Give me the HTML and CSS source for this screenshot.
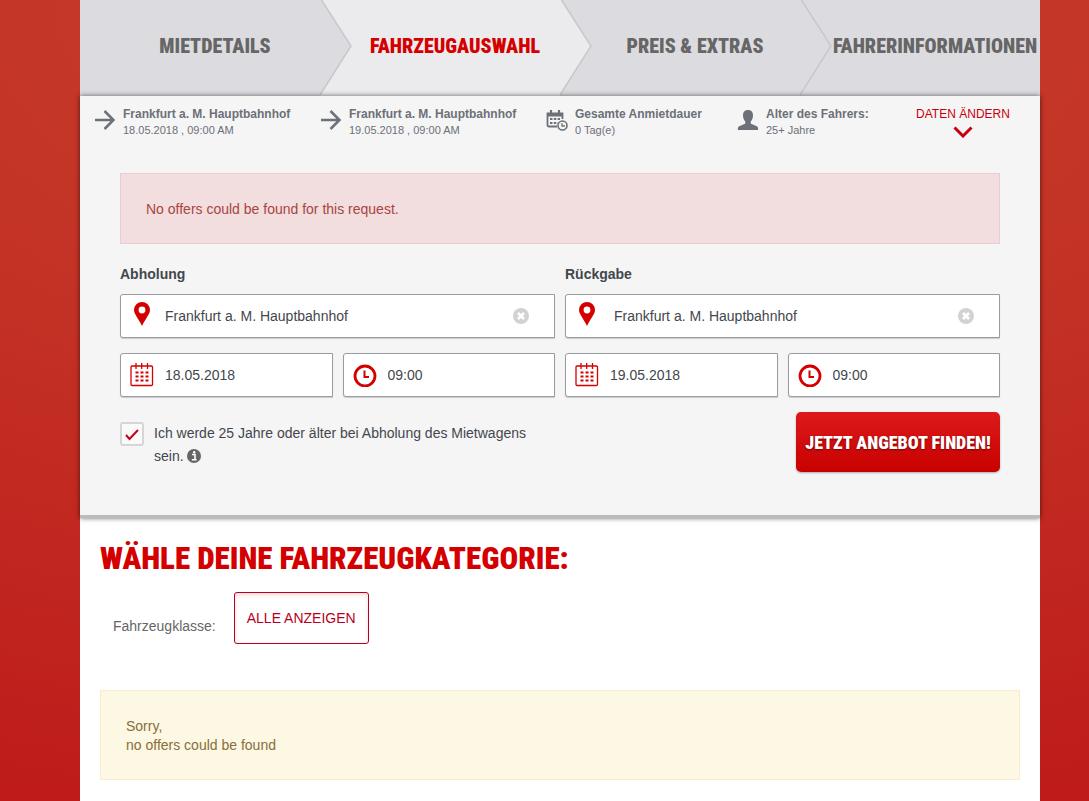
FILE: index.html
```html
<!DOCTYPE html>
<html lang="de">
<head>
    <meta charset="UTF-8">
    <meta name="viewport" content="width=device-width, initial-scale=1.0">
    <title>Fahrzeugauswahl</title>
    <link rel="stylesheet" href="styles.css">
</head>
<body>
    <!-- shared icons -->
    <svg class="sprite" aria-hidden="true">
        <symbol id="arrow" viewBox="0 0 22 22">
            <path d="M1 11h18M10.500 2l9 9-9 9" fill="none" stroke="currentColor" stroke-width="2.500"/>
        </symbol>
        <symbol id="pin" viewBox="0 0 16 24">
            <path fill-rule="evenodd" fill="currentColor" d="M8 0a8 8 0 0 0-8 8c0 4 4.500 8.500 8 16 3.500-7.500 8-12 8-16a8 8 0 0 0-8-8zm0 4.600a3.400 3.400 0 1 1 0 6.800 3.400 3.400 0 0 1 0-6.800z"/>
        </symbol>
        <symbol id="calendar" viewBox="0 0 24 24">
            <rect x="1" y="3" width="21.500" height="19.500" rx="1" fill="none" stroke="currentColor" stroke-width="1.300"/>
            <path d="M6 0v6M11.700 0v6M17.500 0v6" stroke="currentColor" stroke-width="1.300"/>
            <path d="M5.500 9.500h13M5.500 13.500h13M5.500 17.500h13" stroke="currentColor" stroke-width="2" stroke-dasharray="3 2"/>
        </symbol>
        <symbol id="clock" viewBox="0 0 24 24">
            <circle cx="12" cy="13" r="10" fill="none" stroke="currentColor" stroke-width="2.800"/>
            <path d="M11.500 7.500v6.500H16" fill="none" stroke="currentColor" stroke-width="2"/>
        </symbol>
        <symbol id="clear" viewBox="0 0 16 16">
            <circle cx="8" cy="8" r="8" fill="currentColor"/>
            <path d="M5 5l6 6M11 5l-6 6" stroke="#fff" stroke-width="2.600"/>
        </symbol>
        <symbol id="chevron" viewBox="0 0 32 95">
            <path class="chevron-fill" d="M0 0h1.500L31 46 0 95z"/>
            <path d="M1.500 0L31 46 0 95" fill="none" stroke="#c8c8cc" stroke-width="1.500"/>
        </symbol>
    </svg>

    <div class="page">
        <ol class="steps">
            <li class="step">Mietdetails<svg class="step-arrow"><use href="#chevron"/></svg></li>
            <li class="step active" aria-current="step">Fahrzeugauswahl<svg class="step-arrow"><use href="#chevron"/></svg></li>
            <li class="step">Preis &amp; Extras<svg class="step-arrow"><use href="#chevron"/></svg></li>
            <li class="step">Fahrerinformationen</li>
        </ol>

        <section class="search">
            <div class="summary">
                <div class="summary-item">
                    <svg class="summary-icon"><use href="#arrow"/></svg>
                    <p><strong>Frankfurt a. M. Hauptbahnhof</strong><br>18.05.2018 , 09:00 AM</p>
                </div>
                <div class="summary-item">
                    <svg class="summary-icon"><use href="#arrow"/></svg>
                    <p><strong>Frankfurt a. M. Hauptbahnhof</strong><br>19.05.2018 , 09:00 AM</p>
                </div>
                <div class="summary-item">
                    <svg class="summary-icon" viewBox="0 0 22 22">
                        <path d="M11 17.500H3q-1.500 0-1.500-1.500V4.500h15V10M1.500 6.500h15" fill="none" stroke="currentColor" stroke-width="1.800"/>
                        <path d="M5 1v4M13 1v4" stroke="currentColor" stroke-width="2.200"/>
                        <path d="M4 10h10M4 14h8" stroke="currentColor" stroke-width="2.200" stroke-dasharray="2.500 1.300"/>
                        <circle cx="16.500" cy="16.500" r="4.500" fill="#f5f5f5" stroke="currentColor" stroke-width="1.600"/>
                        <path d="M16 14v3h3" fill="none" stroke="currentColor" stroke-width="1.300"/>
                    </svg>
                    <p><strong>Gesamte Anmietdauer</strong><br>0 Tag(e)</p>
                </div>
                <div class="summary-item">
                    <svg class="summary-icon" viewBox="0 0 22 22">
                        <path fill="currentColor" d="M11 1c3.400 0 5 2.200 5 5.500 0 2.500-1 4.800-2.300 6v2c1.500 1.300 4.800 1.800 6.500 3 .8.600 1 2 1 3.500H.8c0-1.500.2-2.900 1-3.500 1.700-1.200 5-1.700 6.500-3v-2C7 11.300 6 9 6 6.500 6 3.200 7.600 1 11 1z"/>
                    </svg>
                    <p><strong>Alter des Fahrers:</strong><br>25+ Jahre</p>
                </div>
                <a class="change" href="#suche">Daten ändern
                    <svg class="change-icon" viewBox="0 0 20 12"><path d="M1.500 1.500L10 10l8.500-8.500" fill="none" stroke="currentColor" stroke-width="3"/></svg>
                </a>
            </div>

            <form class="search-form" id="suche">
                <p class="alert alert-danger">No offers could be found for this request.</p>

                <div class="stations">
                    <fieldset class="station">
                        <legend>Abholung</legend>
                        <div class="field field-wide">
                            <svg class="pin"><use href="#pin"/></svg>
                            <input type="text" aria-label="Abholstation" value="Frankfurt a. M. Hauptbahnhof">
                            <button class="clear" type="button" aria-label="Eingabe löschen"><svg><use href="#clear"/></svg></button>
                        </div>
                        <div class="field">
                            <svg class="field-icon"><use href="#calendar"/></svg>
                            <input type="text" aria-label="Abholdatum" value="18.05.2018">
                        </div>
                        <div class="field">
                            <svg class="field-icon"><use href="#clock"/></svg>
                            <input type="text" aria-label="Abholzeit" value="09:00">
                        </div>
                    </fieldset>
                    <fieldset class="station">
                        <legend>Rückgabe</legend>
                        <div class="field field-wide field-return">
                            <svg class="pin"><use href="#pin"/></svg>
                            <input type="text" aria-label="Rückgabestation" value="Frankfurt a. M. Hauptbahnhof">
                            <button class="clear" type="button" aria-label="Eingabe löschen"><svg><use href="#clear"/></svg></button>
                        </div>
                        <div class="field">
                            <svg class="field-icon"><use href="#calendar"/></svg>
                            <input type="text" aria-label="Rückgabedatum" value="19.05.2018">
                        </div>
                        <div class="field">
                            <svg class="field-icon"><use href="#clock"/></svg>
                            <input type="text" aria-label="Rückgabezeit" value="09:00">
                        </div>
                    </fieldset>
                </div>

                <div class="form-footer">
                    <div class="age">
                        <input type="checkbox" id="age" checked>
                        <label for="age">Ich werde 25 Jahre oder älter bei Abholung des Mietwagens sein.
                            <svg class="info" viewBox="0 0 14 14"><circle cx="7" cy="7" r="7" fill="#666"/><path d="M5 5.500h3v5M4.800 10.700h4.800" fill="none" stroke="#fff" stroke-width="1.600"/><circle cx="7.200" cy="3.200" r="1.200" fill="#fff"/></svg>
                        </label>
                    </div>
                    <button class="submit" type="submit">Jetzt Angebot finden!</button>
                </div>
            </form>
        </section>

        <main class="results">
            <h1>Wähle deine Fahrzeugkategorie:</h1>
            <div class="filter">
                <span>Fahrzeugklasse:</span>
                <button class="filter-button" type="button">Alle anzeigen</button>
            </div>
            <p class="alert alert-warning">Sorry,<br>no offers could be found</p>
        </main>
    </div>
</body>
</html>
```
FILE: styles.css
```css
* {
    box-sizing: border-box;
}

body {
    margin: 0;
    padding: 0 49px 0 80px;
    min-height: 100vh;
    background: radial-gradient(ellipse 150% 105% at 50% 0, #c63f28 0%, #c43426 40%, #be1b1a 100%) #be1b1a;
    color: #43474d;
    font-family: "Liberation Sans", Arial, sans-serif;
    font-size: 14px;
}

p {
    margin: 0;
}

.sprite {
    display: none;
}

.page {
    display: flex;
    flex-direction: column;
    max-width: 960px;
    min-height: 100vh;
    background-color: #fff;
}

/* step navigation */
.steps {
    display: grid;
    grid-template-columns: repeat(4, minmax(0, 1fr));
    margin: 0;
    padding: 0;
    list-style: none;
    background-color: #dcdce0;
}

.step {
    position: relative;
    display: flex;
    align-items: center;
    justify-content: center;
    height: 96px;
    padding: 0 0 4px 30px;
    color: #666;
    font-family: "Roboto Condensed", "Liberation Sans Narrow", "Liberation Sans", sans-serif;
    font-size: 20px;
    font-weight: 900;
    text-transform: uppercase;
    white-space: nowrap;
}

.step.active {
    background-color: #ebebed;
    color: #d40000;
}

.step-arrow {
    position: absolute;
    top: 0;
    left: 100%;
    z-index: 1;
    width: 32px;
    height: 95px;
    fill: #dcdce0;
}

.step.active .step-arrow {
    fill: #ebebed;
}

/* search panel */
.search {
    position: relative;
    z-index: 2;
    background-color: #f5f5f5;
    border-bottom: 3px solid #bbb;
    box-shadow: 0 0 5px rgba(0, 0, 0, 0.6);
}

.summary {
    display: grid;
    grid-template-columns: 226fr 226fr 191fr 163fr 126fr;
    padding: 10px 14px 0;
    color: #6c7078;
    font-size: 11px;
    line-height: 16px;
}

.summary-item {
    display: flex;
    gap: 7px;
    white-space: nowrap;
}

.summary-icon {
    flex: none;
    width: 22px;
    height: 22px;
    margin-top: 3px;
}

.summary strong {
    font-size: 12px;
}

.change {
    display: flex;
    flex-direction: column;
    align-items: center;
    color: #c8000c;
    font-size: 12px;
    text-decoration: none;
    text-transform: uppercase;
    white-space: nowrap;
}

.change-icon {
    width: 20px;
    height: 12px;
    margin-top: 4px;
}

.search-form {
    padding: 35px 40px 43px;
}

.alert {
    padding: 26px 25px 24px;
    border: 1px solid;
    line-height: 19px;
}

.alert-danger {
    background-color: #f2dede;
    border-color: #ebccd1;
    color: #a94442;
}

.alert-warning {
    background-color: #fcf8e3;
    border-color: #faebcc;
    color: #8a6d3b;
}

.stations {
    display: grid;
    grid-template-columns: repeat(2, minmax(0, 1fr));
    gap: 10px;
    margin-top: 20px;
}

.station {
    display: grid;
    grid-template-columns: repeat(2, minmax(0, 1fr));
    gap: 15px 10px;
    min-width: 0;
    margin: 0;
    padding: 0;
    border: 0;
}

.station legend {
    padding: 0 0 10px;
    font-weight: bold;
    line-height: 20px;
}

.field {
    display: flex;
    align-items: center;
    gap: 11px;
    height: 44px;
    padding: 0 9px;
    background-color: #fff;
    border: 1px solid #9a9ca4;
    border-radius: 3px 0 0 3px;
    box-shadow: 0 1px 1px #ccc;
}

.field-wide {
    grid-column: 1 / -1;
    gap: 15px;
    padding: 0 25px 0 13px;
}

.field-return {
    gap: 19px;
}

.field input {
    flex: 1;
    min-width: 0;
    padding: 0;
    border: 0;
    background: none;
    color: #43474d;
    font: inherit;
}

.field svg {
    flex: none;
    color: #d40000;
}

.field .pin {
    width: 16px;
    height: 24px;
    margin-bottom: 4px;
}

.field-icon {
    width: 24px;
    height: 24px;
}

.field .clear {
    display: flex;
    padding: 0;
    border: 0;
    background: none;
}

.field .clear svg {
    width: 16px;
    height: 16px;
    color: #d2d2d2;
}

.form-footer {
    display: flex;
    justify-content: space-between;
    align-items: flex-start;
    gap: 20px;
    margin-top: 15px;
}

.age {
    display: flex;
    gap: 10px;
    max-width: 435px;
    padding-top: 10px;
    line-height: 23px;
}

.age input {
    flex: none;
    appearance: none;
    width: 24px;
    height: 24px;
    margin: 0;
    border: 2px solid #d6d6d8;
    border-radius: 3px;
    background: #fafafa;
}

.age input:checked {
    background: #fafafa url("data:image/svg+xml,%3Csvg xmlns='http://www.w3.org/2000/svg' viewBox='0 0 20 20'%3E%3Cpath d='M4 11l3.500 4L16 6' fill='none' stroke='%23c8001c' stroke-width='2'/%3E%3C/svg%3E") center / 20px no-repeat;
}

.info {
    width: 14px;
    height: 14px;
    vertical-align: -2px;
}

.submit {
    width: 204px;
    height: 60px;
    padding: 0;
    border: 0;
    border-radius: 5px;
    background: linear-gradient(#dc1a1a, #c80000);
    box-shadow: 0 1px 2px rgba(0, 0, 0, 0.3);
    color: #fff;
    font-family: "Roboto Condensed", "Liberation Sans Narrow", "Liberation Sans", sans-serif;
    font-size: 18px;
    font-weight: 900;
    text-shadow: 0 1px 2px #700;
    text-transform: uppercase;
    white-space: nowrap;
    cursor: pointer;
}

/* vehicle categories */
.results {
    padding: 16px 20px 20px;
}

.results h1 {
    margin: 0;
    color: #d40000;
    font-family: "Roboto Condensed", "Liberation Sans Narrow", "Liberation Sans", sans-serif;
    font-size: 31px;
    font-weight: 900;
    line-height: 50px;
    text-transform: uppercase;
}

.filter {
    display: flex;
    align-items: center;
    gap: 18px;
    margin: 8px 0 46px 13px;
    color: #666;
}

.filter span {
    padding-top: 16px;
}

.filter-button {
    height: 52px;
    padding: 0 12px;
    border: 1px solid #b8001c;
    border-radius: 3px;
    background-color: #fff;
    box-shadow: inset 0 2px 4px #f6dada;
    color: #b8001c;
    font: inherit;
    text-transform: uppercase;
    cursor: pointer;
}
```
